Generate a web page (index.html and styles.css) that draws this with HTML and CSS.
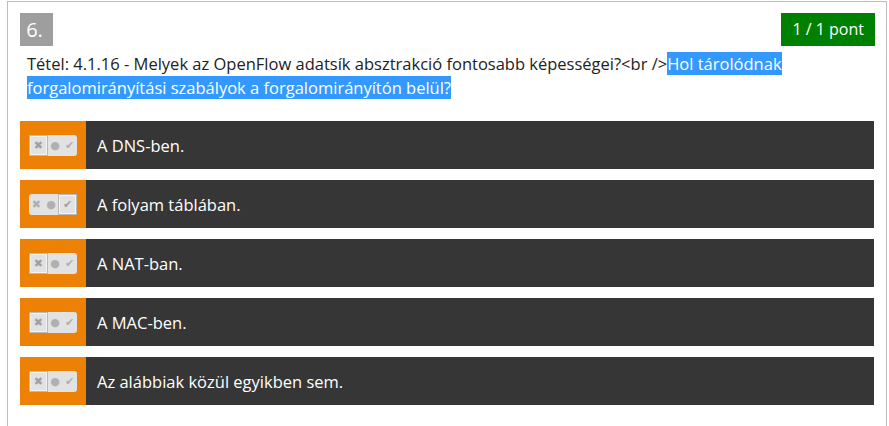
FILE: index.html
```html
<!DOCTYPE html>
<html lang="hu">
<head>
<meta charset="utf-8">
<link rel="stylesheet" href="styles.css">
</head>
<body>
<div class="question">
  <div class="head">
    <div class="num">6.</div>
    <div class="score">1 / 1 pont</div>
  </div>
  <p class="qtext">Tétel: 4.1.16 - Melyek az OpenFlow adatsík absztrakció fontosabb képességei?&lt;br /&gt;<span class="sel">Hol tárolódnak forgalomirányítási szabályok a forgalomirányítón belül?</span></p>
  <div class="answers">
    <div class="answer">
      <div class="mark"><div class="toggle"><span class="seg on">✖</span><span class="seg">●</span><span class="seg">✔</span></div></div>
      <div class="label">A DNS-ben.</div>
    </div>
    <div class="answer">
      <div class="mark"><div class="toggle"><span class="seg">✖</span><span class="seg">●</span><span class="seg on">✔</span></div></div>
      <div class="label">A folyam táblában.</div>
    </div>
    <div class="answer">
      <div class="mark"><div class="toggle"><span class="seg on">✖</span><span class="seg">●</span><span class="seg">✔</span></div></div>
      <div class="label">A NAT-ban.</div>
    </div>
    <div class="answer">
      <div class="mark"><div class="toggle"><span class="seg on">✖</span><span class="seg">●</span><span class="seg">✔</span></div></div>
      <div class="label">A MAC-ben.</div>
    </div>
    <div class="answer">
      <div class="mark"><div class="toggle"><span class="seg on">✖</span><span class="seg">●</span><span class="seg">✔</span></div></div>
      <div class="label">Az alábbiak közül egyikben sem.</div>
    </div>
  </div>
</div>
</body>
</html>
```
FILE: styles.css
```css
html, body {
  margin: 0;
  padding: 0;
  background: #fff;
}
body {
  padding: 1px 2px 0 7px;
  font-family: "Open Sans", "Liberation Sans", sans-serif;
  color: #222;
}
.question {
  border: 1px solid #bdbdbd;
  border-bottom: none;
  min-height: calc(100vh - 1px);
  box-sizing: border-box;
  padding: 11px 12px 0 12px;
}
.head {
  display: flex;
  justify-content: space-between;
  align-items: flex-start;
}
.num {
  width: 33px;
  height: 33px;
  background: #9e9e9e;
  color: #fff;
  font-size: 20px;
  line-height: 33px;
  text-align: center;
  box-sizing: border-box;
  padding-right: 4px;
}
.score {
  background: #008000;
  color: #fff;
  font-size: 16px;
  height: 33px;
  line-height: 33px;
  padding: 0 11px;
  margin-right: -1px;
}
.qtext {
  margin: 6px 0 0 7px;
  padding-right: 80px;
  font-size: 16.5px;
  line-height: 24px;
}
.sel {
  background: #3399ff;
  color: #fff;
}
.answers {
  margin-top: 21px;
  display: flex;
  flex-direction: column;
  gap: 11px;
}
.answer {
  display: flex;
  height: 48px;
  background: #363636;
}
.mark {
  width: 66px;
  background: #ec8106;
  display: flex;
  align-items: center;
  padding-left: 9px;
  box-sizing: border-box;
}
.toggle {
  display: flex;
  width: 48px;
  height: 21px;
  background: #e2e2e2;
  border-radius: 3px;
}
.seg {
  flex: 1;
  display: flex;
  align-items: center;
  justify-content: center;
  color: #b0b0b0;
  font-family: "DejaVu Sans", sans-serif;
  font-size: 11px;
  box-sizing: border-box;
}
.seg.on {
  border: 2px solid #f4f4f4;
  outline: 1px solid #b8b8b8;
  outline-offset: -1px;
  color: #a0a0a0;
}
.label {
  color: #fff;
  font-size: 16.5px;
  display: flex;
  align-items: center;
  padding-left: 11px;
}
```
